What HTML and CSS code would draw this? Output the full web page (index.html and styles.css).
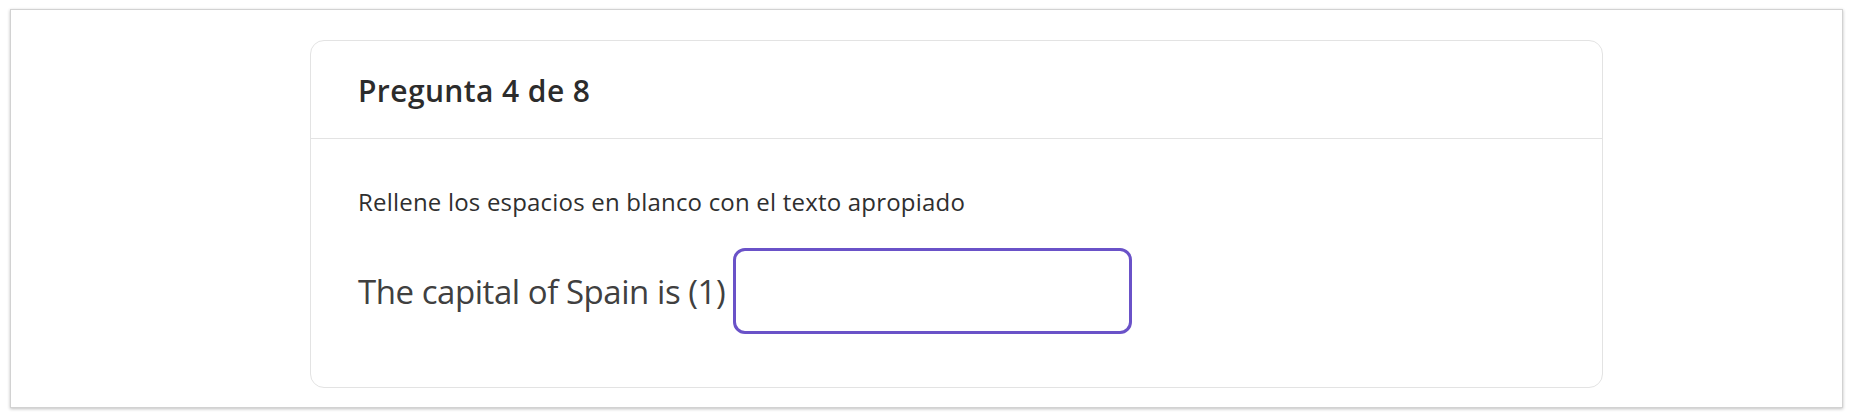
FILE: index.html
```html
<!DOCTYPE html>
<html lang="es">
<head>
    <meta charset="UTF-8">
    <meta name="viewport" content="width=device-width, initial-scale=1.0">
    <title>Pregunta 4 de 8</title>
    <link rel="stylesheet" href="styles.css">
</head>
<body>
    <div class="frame">
        <div class="question-card">
            <div class="question-header">
                <h2>Pregunta 4 de 8</h2>
            </div>
            <div class="question-body">
                <p class="instructions">Rellene los espacios en blanco con el texto apropiado</p>
                <div class="blank-row">
                    <span class="blank-text">The capital of Spain is (1)</span>
                    <input type="text" class="blank-input" aria-label="Respuesta 1">
                </div>
            </div>
        </div>
    </div>
</body>
</html>
```

FILE: styles.css
```css
body {
    font-family: "Open Sans", "Noto Sans", Arial, sans-serif;
    background: #fff;
    margin: 0;
    padding: 9px 9px 10px 10px;
    color: #333;
}

.frame {
    background: white;
    border: 1px solid #d2d2d2;
    box-shadow: 0 1px 3px rgba(0, 0, 0, 0.25);
    padding: 30px 239px 18px 299px;
    height: 399px;
    box-sizing: border-box;
}

.question-card {
    border: 1px solid #e3e3e3;
    border-radius: 14px;
    background: #fff;
}

.question-header {
    padding: 31px 47px 28px;
    border-bottom: 1px solid #e3e3e3;
}

.question-header h2 {
    margin: 0;
    font-size: 30px;
    line-height: 38px;
    letter-spacing: 0.4px;
    font-weight: 600;
    color: #2c2c2c;
}

.question-body {
    padding: 48px 47px 53px;
}

.instructions {
    margin: 0 0 31px;
    font-size: 24px;
    line-height: 30px;
    letter-spacing: 0.2px;
    color: #2f2f2f;
}

.blank-row {
    display: flex;
    align-items: center;
    gap: 8px;
}

.blank-text {
    font-size: 33px;
    letter-spacing: -0.45px;
    color: #404040;
}

.blank-input {
    width: 399px;
    height: 86px;
    box-sizing: border-box;
    border: 3px solid #6a52c8;
    border-radius: 12px;
    font-family: inherit;
    font-size: 28px;
    padding: 0 14px;
    outline: none;
}
```
